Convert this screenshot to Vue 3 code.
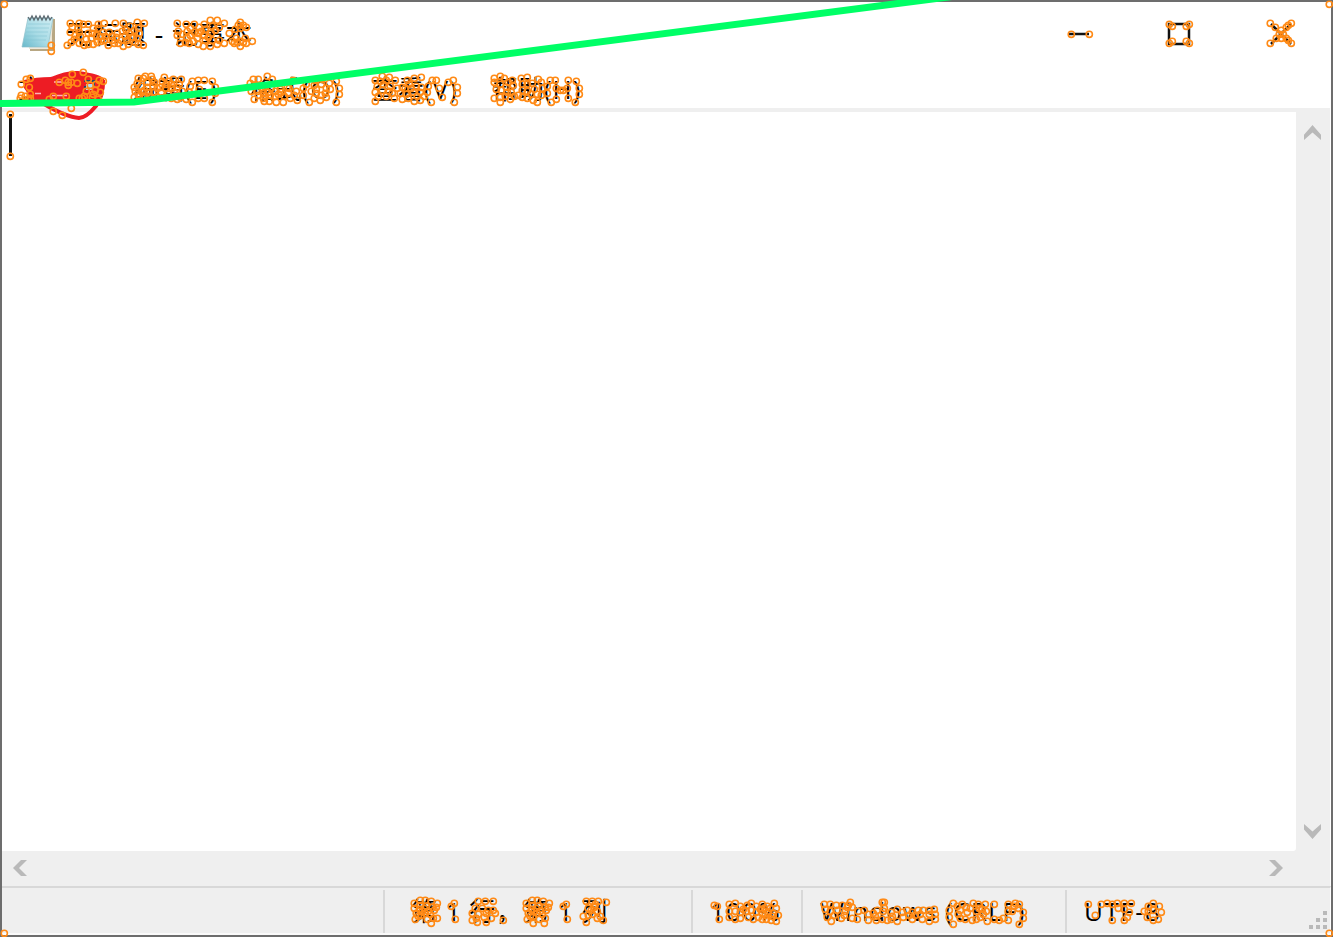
<script setup>
const parse = (text) => text.trim().split(/\s+/).map((pair) => pair.split(',').map(Number))

const menus = [
  { key: 'file', label: '文件', hot: '(F)' },
  { key: 'edit', label: '编辑', hot: '(E)' },
  { key: 'format', label: '格式', hot: '(O)' },
  { key: 'view', label: '查看', hot: '(V)' },
  { key: 'help', label: '帮助', hot: '(H)' }
]

const anchors = parse(`
4,4 1329,4 4,933 1329,933 10,114 10,156 51,45 51,51
70,23 79,23 72,27 78,28 83,24 88,24 70,32 79,32 67,45 71,42 74,39 80,36 84,45 88,44 88,33 93,28 98,24 98,28 96,35 97,42 93,44
75,35 79,43 86,39 91,38 92,33 101,41 105,36 112,36 114,43 127,40 126,30 133,37 139,33 138,44
104,23 115,23 109,32 103,32 100,36 108,45 112,40 104,40 116,37 118,43 123,46 128,44 123,23 130,26 137,22 144,23 122,31 129,33 134,30 138,28 125,36 131,37 121,40 135,42 143,45 137,38 117,33
177,23 186,24 194,24 178,31 177,35 182,34 187,31 194,32 193,41 187,38 180,43 185,42 198,44 203,46 190,28 210,20 217,20 224,23 204,24 205,29 212,26 219,27 204,35 211,33 198,33 224,43 205,40 212,40 219,40 210,46 217,44
190,35 197,38 201,31 208,37 215,30 189,43 199,27
240,22 240,28 229,33 235,29 246,27 232,41 236,38 240,41 245,38 252,41 240,46 234,43 246,43 238,25 243,25 243,42 237,42
26,79 30,78 21,84 29,87 21,95 20,98 25,96 30,98 30,94 28,99 49,99 59,82 65,80 68,82 71,82 68,85 77,83 72,74 83,72 88,79 90,85 96,84 99,80 103,81 86,91 84,96 82,98 79,98 93,94 92,97 100,92 98,99 95,90 66,96 53,96 53,111 62,115 71,108
138,78 143,78 145,76 151,76 152,79 147,82 137,83 134,87 141,86 147,87 153,86 135,91 142,92 148,92 134,97 139,96 145,97 151,97 157,97 162,81 164,77 169,81 160,87 165,88 172,88 161,92 168,94 177,87 173,79 181,79 179,84 174,92 171,98 180,97 177,99 186,99 192,81 190,86 189,92 192,102 198,80 204,80 199,89 204,98 198,98 212,81 215,87 215,93 212,102
138,94 144,90 149,96 154,92 157,88 154,82 166,84 171,84 165,97 175,96 182,91
253,79 258,79 267,76 272,79 250,83 256,85 264,86 251,91 257,91 263,89 271,88 254,99 258,95 265,96 270,95 264,101 269,101 275,91 280,89 287,87 293,80 278,94 284,96 276,102 283,102 290,98 297,100 289,88 296,91 303,88 306,84 309,102 303,95 315,80 322,79 329,83 330,89 326,97 320,100 314,98 311,91 314,85 321,84 326,88 325,93 321,95 316,93 316,89 336,81 339,88 339,94 336,102
263,93 268,92 275,96 281,92 288,93 294,95 263,98
375,80 382,76 389,77 395,80 377,86 383,84 390,86 375,92 382,90 389,91 397,88 378,96 386,96 394,98 375,101 407,80 414,78 421,77 402,87 409,84 416,86 421,87 406,94 413,92 420,92 402,99 408,98 414,101 420,100 432,80 428,86 427,92 431,102 436,80 439,88 442,97 448,82 453,80 457,87 457,93 454,102
380,81 386,80 392,93 400,93 405,88 411,88 417,96 424,96
494,78 500,76 504,78 494,82 500,84 496,89 501,90 506,87 494,98 500,97 505,96 500,102 508,82 512,80 511,92 514,96 510,99 521,78 527,77 522,84 527,84 522,90 527,91 522,97 527,98 532,83 538,79 541,82 534,89 537,94 533,100 537,102 550,80 547,86 547,93 551,102 555,80 556,88 560,90 556,99 568,80 567,88 568,98 563,90 576,81 579,88 579,94 575,102
507,92 513,85 518,95 531,94 542,88 541,95
1071,34 1089,34 1169,24 1172,26 1186,26 1189,24 1169,43 1172,41 1186,41 1189,43 1270,23 1275,27 1281,30 1286,27 1291,23 1279,34 1283,34 1276,38 1270,43 1281,38 1286,38 1291,43 1288,25 1288,40
414,903 420,900 425,900 431,901 437,903 414,908 420,905 426,906 432,907 416,913 422,911 428,911 434,910 415,919 421,915 427,919 433,918 431,923 437,918 451,906 454,903 455,919 478,901 485,901 493,901 475,908 482,908 488,910 493,910 472,913 478,914 486,913 495,913 472,920 477,922 486,922 491,918 503,920
418,916 424,908 430,914 436,907 419,909 425,913 476,918 484,917
526,903 532,900 537,900 543,901 549,903 526,908 532,905 538,906 545,907 528,913 534,911 540,911 546,910 527,919 533,916 539,919 545,918 533,923 544,923 563,906 566,904 567,919 586,901 592,901 598,901 606,902 588,908 594,907 597,911 583,916 588,915 592,914 586,922 597,918 600,916 603,920
530,916 536,908 542,914 548,907 531,909 537,913 591,910 595,904
714,905 717,906 719,919 729,904 735,903 740,906 729,911 735,911 740,912 729,917 735,919 740,918 747,905 751,903 756,906 746,911 751,910 756,912 748,917 753,919 758,917 762,904 764,908 760,909 774,903 770,908 765,915 762,919 768,912 773,913 778,915 776,921 771,920
767,906 766,919 772,916 762,913 776,908 743,909
824,904 830,904 836,905 842,905 848,905 825,909 830,911 827,917 831,921 837,910 841,918 845,911 850,902 852,907 852,918 858,911 864,910 868,914 857,919 868,920 875,916 877,910 883,911 884,902 884,908 876,920 882,919 887,920 891,912 897,909 902,912 903,917 897,921 891,919 907,910 912,912 912,919 918,910 923,910 922,919 929,910 934,909 929,914 935,914 935,919 929,921
834,915 844,915 847,907 909,915 915,915 920,914 882,902 873,913 892,916
953,903 949,910 949,917 953,924 962,904 966,907 960,910 967,912 960,918 965,919 973,903 978,904 985,904 982,909 976,911 983,914 976,919 987,921 994,904 994,919 999,920 1008,904 1015,903 1008,911 1014,906 1008,920 1019,904 1023,912 1023,918 1019,924
957,906 958,914 970,908 972,920 979,908 986,911 980,917 1003,918 1012,911 1018,908
1088,904 1095,915 1101,904 1107,903 1112,904 1117,903 1118,908 1112,920 1124,903 1131,903 1124,909 1129,912 1124,920 1148,906 1153,903 1159,906 1148,911 1153,910 1161,912 1147,917 1153,920 1158,919 1127,917 1144,911
`)
</script>

<template>
  <main class="window">
    <header class="titlebar">
      <svg class="notebook" width="38" height="44" viewBox="0 0 38 44">
        <defs>
          <linearGradient id="sheet" x1="1" y1="0" x2="0" y2="1">
            <stop offset="0" stop-color="#d0edf3" />
            <stop offset=".55" stop-color="#a8dbe5" />
            <stop offset="1" stop-color="#68b9cb" />
          </linearGradient>
        </defs>
        <path d="M31 8h4v32H10v-2h22z" fill="#b8a783" />
        <path d="M8 7h25l-2 31H9z" fill="#eee8d9" />
        <path d="M8 7h25l-5 29H2z" fill="url(#sheet)" stroke="#8dbfca" stroke-width=".7" />
        <path d="M8 13h22M7 17h22M6 21h22M5 25h22M4 29h22" stroke="#82c3d2" stroke-width=".8" opacity=".65" />
        <path d="m8 6 2 3 2-4 2 4 2-4 2 4 2-4 2 4 2-4 2 4 2-4 2 4 2-3" fill="none" stroke="#5c6970" stroke-width="1.3" />
      </svg>
      <h1>无标题 - 记事本</h1>
      <div class="controls">
        <svg viewBox="0 0 28 28"><path d="M4 14h20" /></svg>
        <svg viewBox="0 0 28 28"><path d="M4 4h20v20H4z" /></svg>
        <svg viewBox="0 0 28 28"><path d="m4 4 20 20M24 4 4 24" /></svg>
      </div>
    </header>

    <nav class="menubar">
      <span v-for="menu in menus" :key="menu.key" :class="menu.key">{{ menu.label }}<b>{{ menu.hot }}</b></span>
    </nav>

    <section class="editor">
      <div class="page"><i class="caret"></i></div>
      <div class="vertical">
        <svg width="17" height="15" viewBox="0 0 16 14"><path d="M0 9 8 0l8 9v5L8 7l-8 7z" /></svg>
        <svg width="17" height="15" viewBox="0 0 16 14"><path d="m0 0 8 7 8-7v5l-8 9-8-9z" /></svg>
      </div>
      <div class="horizontal">
        <svg width="14" height="16"><path d="M14 0H8L0 8l8 8h6L6 8z" /></svg>
        <svg width="14" height="16"><path d="M0 0h6l8 8-8 8H0l8-8z" /></svg>
      </div>
    </section>

    <footer class="statusbar">
      <span></span>
      <span class="position">第 1 行，第 1 列</span>
      <span class="zoom">100%</span>
      <span class="ending">Windows (CRLF)</span>
      <span class="encoding">UTF-8</span>
      <svg class="grip" width="18" height="18"><path d="M14 0h4v4h-4zM7 7h4v4H7zM14 7h4v4h-4zM0 14h4v4H0zM7 14h4v4H7zM14 14h4v4h-4z" /></svg>
    </footer>

    <svg class="annotations" viewBox="0 0 1333 937">
      <path d="M24 80Q36 77 51 77Q67 70 78 71Q101 74 104 79Q107 87 99 101H28Q29 94 24 88Z" fill="#ed1c24" />
      <path d="M103 80Q103 97 96 106Q86 118 79 118Q66 117 44 104" fill="none" stroke="#ed1c24" stroke-width="4" />
      <path d="M54 82h9M35 93.5h6M52 95.5h15" fill="none" stroke="#ffb4b8" stroke-width="1.3" />
      <path d="M84 81h10v6H84" fill="none" stroke="#174b73" stroke-width="2" />
      <path d="M86 84h7v6h-7z" fill="#b3def7" />
      <g class="anchors"><circle v-for="(point, index) in anchors" :key="index" :cx="point[0] + .3" :cy="point[1] + .3" r="3.1" /></g>
      <path d="M-5 103.5 134 102 952-3.5" fill="none" stroke="#00ff66" stroke-width="7" />
    </svg>
  </main>
</template>

<style>
body { margin: 0; overflow: hidden; }
</style>

<style scoped>
.window { position: relative; box-sizing: border-box; width: 1333px; height: 937px; padding: 2px; background: #6d6d6d; display: grid; grid-template-rows: 66px 40px 778px 49px; overflow: hidden; color: #000; font: 26px/30px "Open Sans", "Noto Sans CJK SC", sans-serif; }
.titlebar { display: flex; align-items: center; padding-left: 18px; background: #fff; }
.notebook { margin-top: -4px; }
h1 { margin: -2px 0 0 8px; font-size: 26.5px; line-height: 30px; font-weight: 400; white-space: pre; letter-spacing: .3px; word-spacing: 1.2px; }
.controls { display: flex; gap: 73px; margin-left: auto; margin-right: 36px; margin-top: -3px; }
.controls svg { width: 28px; height: 28px; fill: none; stroke: #111; stroke-width: 2.5; }
.controls svg:nth-child(2) { margin-left: -1px; margin-right: 1px; }
.menubar { display: grid; grid-template-columns: 115px 117px 122px 120px 120px; padding-left: 16px; align-items: center; white-space: nowrap; background: #fff; }
.menubar span { margin-top: 2px; }
.menubar b { font-weight: 400; letter-spacing: .9px; }
.editor { display: grid; grid-template-columns: 1294px 34px; grid-template-rows: 743px 35px; background: #efefef; border-right: 1px solid #fff; }
.page { background: #fff; margin-top: 4px; border-radius: 0 0 3px 0; }
.caret { display: block; width: 3px; height: 42px; margin: 2px 0 0 7px; background: #111; }
.vertical { display: flex; flex-direction: column; justify-content: space-between; align-items: center; padding: 17px 2px 12px 0; }
.vertical path, .horizontal path { fill: #b9b9b9; }
.vertical svg, .horizontal svg { display: block; }
.horizontal { display: flex; justify-content: space-between; padding: 9px 13px 0 11px; }
.statusbar { display: grid; grid-template-columns: 383px 308px 110px 264px 1fr 18px; box-sizing: border-box; border-top: 2px solid #d8d8d8; border-right: 1px solid #fff; border-bottom: 2px solid #fafafa; background: #efefef; padding-right: 3px; }
.statusbar span { box-sizing: border-box; height: 43px; margin-top: 2px; padding-top: 6px; border-right: 2px solid #d8d8d8; white-space: pre; }
.statusbar .position { padding-left: 26px; letter-spacing: .95px; }
.statusbar .zoom { padding-left: 17px; letter-spacing: 1.2px; }
.statusbar .ending { padding-left: 17px; letter-spacing: .95px; }
.statusbar .encoding { border: 0; padding-left: 17px; letter-spacing: 1.5px; }
.grip { align-self: end; margin-bottom: 4px; }
.grip path { fill: #b9b9b9; }
.annotations { position: absolute; left: 0; top: 0; width: 1333px; height: 937px; pointer-events: none; }
.anchors { fill: none; stroke: #ff8a16; stroke-width: 1.6; }
</style>
